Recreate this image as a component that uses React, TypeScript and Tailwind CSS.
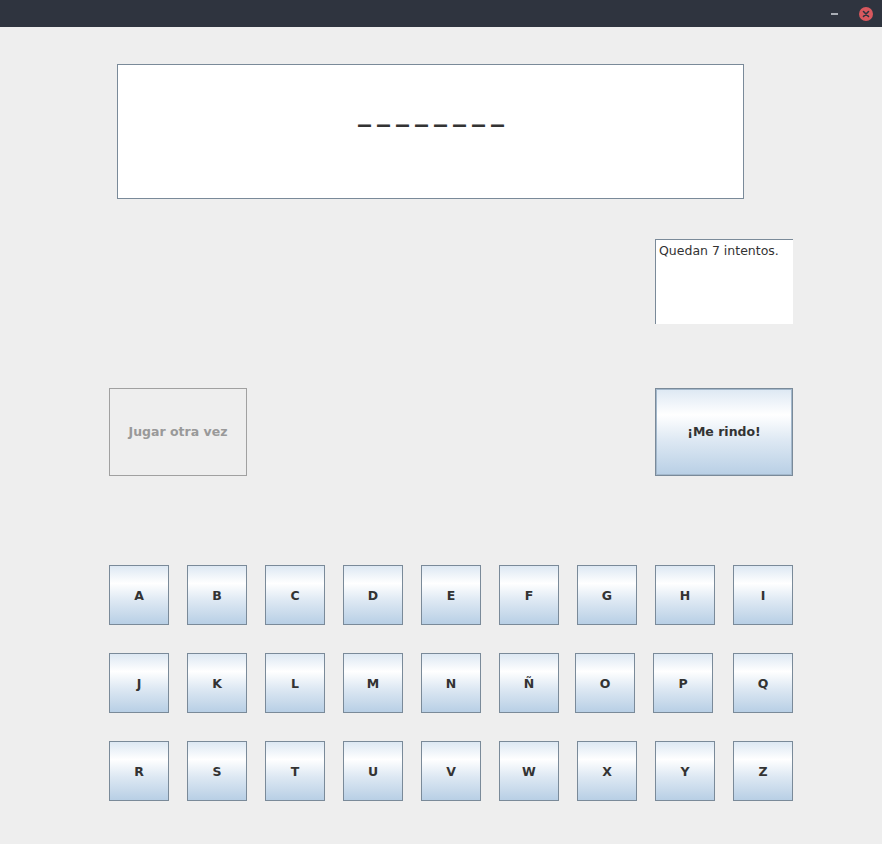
import React from "react";

const rows: { label: string; ml: number }[][] = [
  ["A", "B", "C", "D", "E", "F", "G", "H", "I"].map((l, i) => ({ label: l, ml: i === 0 ? 0 : 18 })),
  [
    { label: "J", ml: 0 },
    { label: "K", ml: 18 },
    { label: "L", ml: 18 },
    { label: "M", ml: 18 },
    { label: "N", ml: 18 },
    { label: "Ñ", ml: 18 },
    { label: "O", ml: 16 },
    { label: "P", ml: 18 },
    { label: "Q", ml: 20 },
  ],
  ["R", "S", "T", "U", "V", "W", "X", "Y", "Z"].map((l, i) => ({ label: l, ml: i === 0 ? 0 : 18 })),
];

const ocean = "bg-[linear-gradient(to_bottom,#dde8f3_0%,#ffffff_30%,#dde8f3_60%,#b8cfe5_100%)]";

const App: React.FC = () => {
  return (
    <div className="w-[882px] h-[844px] bg-[#eeeeee] flex flex-col font-['DejaVu_Sans',sans-serif] text-[#333333]">
      {/* title bar */}
      <div className="h-[27px] bg-[#2f343f] flex items-center justify-end shrink-0">
        <div className="w-[7px] h-[2px] bg-[#a9adb5] mr-[21px]" />
        <div className="w-[14px] h-[14px] rounded-full bg-[#d9585e] flex items-center justify-center mr-[9px]">
          <svg width="8" height="8" viewBox="0 0 8 8">
            <path d="M1.5 1.5 L6.5 6.5 M6.5 1.5 L1.5 6.5" stroke="#2f343f" strokeWidth="1.6" strokeLinecap="round" />
          </svg>
        </div>
      </div>

      <div className="flex flex-col pl-[109px]">
        {/* word field */}
        <div className="ml-[8px] mt-[37px] w-[627px] h-[135px] bg-white border border-[#7a8a99] flex items-center justify-center">
          <span className="font-['DejaVu_Sans',sans-serif] font-bold text-[26px] leading-none tracking-[6px] text-[#333333] mr-[-6px] mb-[39px] pl-[1px]">
            ________
          </span>
        </div>

        {/* attempts */}
        <div className="mt-[40px] ml-[546px] w-[138px] h-[85px] bg-white border-l border-t border-[#7a8a99] pl-[3px] pt-[2px] text-[12.5px] leading-[18px]">
          Quedan 7 intentos.
        </div>

        {/* action buttons */}
        <div className="mt-[64px] flex w-[684px] justify-between">
          <div className="w-[138px] h-[88px] border border-[#a0a0a0] bg-[#eeeeee] flex items-center justify-center pt-[1px] text-[12.5px] font-bold text-[#999999]">
            Jugar otra vez
          </div>
          <div className={`w-[138px] h-[88px] border border-[#7a8a99] shadow-[inset_0_0_0_1px_#a3b8cc] ${ocean} flex items-center justify-center pt-[1px] text-[12.5px] font-bold`}>
            ¡Me rindo!
          </div>
        </div>

        {/* letters */}
        <div className="mt-[89px] flex flex-col gap-[28px]">
          {rows.map((row, r) => (
            <div key={r} className="flex">
              {row.map((k) => (
                <div
                  key={k.label}
                  style={{ marginLeft: k.ml }}
                  className={`w-[60px] h-[60px] border border-[#7a8a99] ${ocean} flex items-center justify-center pt-[2px] text-[12.5px] font-bold`}
                >
                  {k.label}
                </div>
              ))}
            </div>
          ))}
        </div>
      </div>
    </div>
  );
};

export default App;
